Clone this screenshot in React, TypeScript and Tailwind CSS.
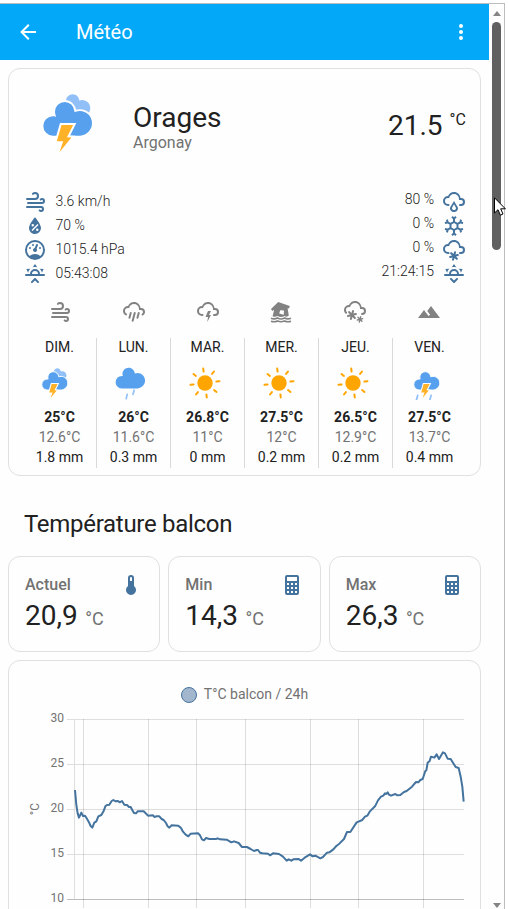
import React from "react";

const CLOUD_SHELL =
  "M6,16A5,5 0 0,1 1,11A5,5 0 0,1 6,6C7,3.65 9.3,2 12,2C15.43,2 18.24,4.66 18.5,8.03L19,8A4,4 0 0,1 23,12A4,4 0 0,1 19,16H18A1,1 0 0,1 17,15A1,1 0 0,1 18,14H19A2,2 0 0,0 21,12A2,2 0 0,0 19,10H17V9A5,5 0 0,0 12,4C9.5,4 7.45,5.82 7.06,8.19C6.73,8.07 6.37,8 6,8A3,3 0 0,0 3,11A3,3 0 0,0 6,14H6.5A1,1 0 0,1 6.5,16H6Z";
const HORIZON =
  "M3,12H7A5,5 0 0,1 12,7A5,5 0 0,1 17,12H21A1,1 0 0,1 22,13A1,1 0 0,1 21,14H3A1,1 0 0,1 2,13A1,1 0 0,1 3,12M15,12A3,3 0 0,0 12,9A3,3 0 0,0 9,12H15M12,2L14.39,5.42C13.65,5.15 12.84,5 12,5C11.16,5 10.35,5.15 9.61,5.42L12,2M3.34,7L7.5,6.65C6.9,7.16 6.36,7.78 5.94,8.5C5.5,9.24 5.25,10 5.11,10.79L3.34,7M20.65,7L18.88,10.79C18.74,10 18.47,9.23 18.05,8.5C17.63,7.78 17.1,7.15 16.5,6.64L20.65,7";
const FLAKE =
  "M7.88,18.07L10.07,17.5L8.46,15.88C8.07,15.5 8.07,14.86 8.46,14.46C8.85,14.07 9.5,14.07 9.88,14.46L11.5,16.07L12.07,13.88C12.21,13.34 12.76,13.03 13.29,13.17C13.83,13.31 14.14,13.86 14,14.4L13.41,16.59L15.6,16C16.14,15.86 16.69,16.17 16.83,16.71C16.97,17.24 16.66,17.79 16.12,17.93L13.93,18.5L15.54,20.12C15.93,20.5 15.93,21.15 15.54,21.54C15.15,21.93 14.5,21.93 14.12,21.54L12.5,19.93L11.93,22.12C11.79,22.66 11.24,22.97 10.71,22.83C10.17,22.69 9.86,22.14 10,21.6L10.59,19.41L8.4,20C7.86,20.14 7.31,19.83 7.17,19.29C7.03,18.76 7.34,18.21 7.88,18.07Z";

const ICONS = {
  back: "M20,11V13H8L13.5,18.5L12.08,19.92L4.16,12L12.08,4.08L13.5,5.5L8,11H20Z",
  dots: "M12,16A2,2 0 0,1 14,18A2,2 0 0,1 12,20A2,2 0 0,1 10,18A2,2 0 0,1 12,16M12,10A2,2 0 0,1 14,12A2,2 0 0,1 12,14A2,2 0 0,1 10,12A2,2 0 0,1 12,10M12,4A2,2 0 0,1 14,6A2,2 0 0,1 12,8A2,2 0 0,1 10,6A2,2 0 0,1 12,4Z",
  windy:
    "M4,10A1,1 0 0,1 3,9A1,1 0 0,1 4,8H12A2,2 0 0,0 14,6A2,2 0 0,0 12,4C11.45,4 10.95,4.22 10.59,4.59C10.2,5 9.56,5 9.17,4.59C8.78,4.2 8.78,3.56 9.17,3.17C9.9,2.45 10.9,2 12,2A4,4 0 0,1 16,6A4,4 0 0,1 12,10H4M19,12A1,1 0 0,0 20,11A1,1 0 0,0 19,10C18.72,10 18.47,10.11 18.29,10.29C17.9,10.68 17.27,10.68 16.88,10.29C16.5,9.9 16.5,9.27 16.88,8.88C17.42,8.34 18.17,8 19,8A3,3 0 0,1 22,11A3,3 0 0,1 19,14H5A1,1 0 0,1 4,13A1,1 0 0,1 5,12H19M18,18H4A1,1 0 0,1 3,17A1,1 0 0,1 4,16H18A3,3 0 0,1 21,19A3,3 0 0,1 18,22C17.17,22 16.42,21.66 15.88,21.12C15.5,20.73 15.5,20.1 15.88,19.71C16.27,19.32 16.9,19.32 17.29,19.71C17.47,19.89 17.72,20 18,20A1,1 0 0,0 19,19A1,1 0 0,0 18,18Z",
  humidity:
    "M12,3.25C12,3.25 6,10 6,14C6,17.32 8.69,20 12,20A6,6 0 0,0 18,14C18,10 12,3.25 12,3.25M14.47,9.97L15.53,11.03L9.53,17.03L8.47,15.97M9.75,10A1.25,1.25 0 0,1 11,11.25A1.25,1.25 0 0,1 9.75,12.5A1.25,1.25 0 0,1 8.5,11.25A1.25,1.25 0 0,1 9.75,10M14.25,14.5A1.25,1.25 0 0,1 15.5,15.75A1.25,1.25 0 0,1 14.25,17A1.25,1.25 0 0,1 13,15.75A1.25,1.25 0 0,1 14.25,14.5Z",
  gauge:
    "M12,2A10,10 0 0,0 2,12A10,10 0 0,0 12,22A10,10 0 0,0 22,12A10,10 0 0,0 12,2M12,4A8,8 0 0,1 20,12C20,14.4 19,16.5 17.3,18C15.9,16.7 14,16 12,16C10,16 8.2,16.7 6.7,18C5,16.5 4,14.4 4,12A8,8 0 0,1 12,4M14,5.89C13.62,5.9 13.26,6.15 13.1,6.54L11.81,9.77L11.71,10C11,10.13 10.41,10.6 10.14,11.26C9.73,12.29 10.23,13.45 11.26,13.86C12.29,14.27 13.45,13.77 13.86,12.74C14.12,12.08 14,11.32 13.57,10.76L13.67,10.5L14.96,7.29L14.97,7.26C15.17,6.75 14.92,6.17 14.41,5.96C14.28,5.91 14.15,5.89 14,5.89M10,6A1,1 0 0,0 9,7A1,1 0 0,0 10,8A1,1 0 0,0 11,7A1,1 0 0,0 10,6M7,9A1,1 0 0,0 6,10A1,1 0 0,0 7,11A1,1 0 0,0 8,10A1,1 0 0,0 7,9M17,9A1,1 0 0,0 16,10A1,1 0 0,0 17,11A1,1 0 0,0 18,10A1,1 0 0,0 17,9Z",
  sunrise:
    HORIZON +
    "M12.71,16.3L15.82,19.41C16.21,19.8 16.21,20.43 15.82,20.82C15.43,21.21 14.8,21.21 14.41,20.82L12,18.41L9.59,20.82C9.2,21.21 8.57,21.21 8.18,20.82C7.79,20.43 7.79,19.8 8.18,19.41L11.29,16.3C11.5,16.1 11.74,16 12,16C12.26,16 12.5,16.1 12.71,16.3Z",
  sunset:
    HORIZON +
    "M12.71,20.71L15.82,17.6C16.21,17.21 16.21,16.57 15.82,16.18C15.43,15.79 14.8,15.79 14.41,16.18L12,18.59L9.59,16.18C9.2,15.79 8.57,15.79 8.18,16.18C7.79,16.57 7.79,17.21 8.18,17.6L11.29,20.71C11.5,20.9 11.74,21 12,21C12.26,21 12.5,20.9 12.71,20.71Z",
  rainy:
    CLOUD_SHELL +
    "M14.83,15.67C16.39,17.23 16.39,19.5 14.83,21.08C14.05,21.86 13,22 12,22C11,22 9.95,21.86 9.17,21.08C7.61,19.5 7.61,17.23 9.17,15.67L12,11L14.83,15.67M13.41,16.69L12,14.25L10.59,16.69C9.8,17.5 9.8,18.7 10.59,19.5C11,19.93 11.5,20 12,20C12.5,20 13,19.93 13.41,19.5C14.2,18.7 14.2,17.5 13.41,16.69Z",
  snowflake:
    "M20.79,13.95L18.46,14.57L16.46,13.44V10.56L18.46,9.43L20.79,10.05L21.31,8.12L19.54,7.65L20,5.88L18.07,5.36L17.45,7.69L15.45,8.82L13,7.38V5.12L14.71,3.41L13.29,2L12,3.29L10.71,2L9.29,3.41L11,5.12V7.38L8.5,8.82L6.5,7.69L5.92,5.36L4,5.88L4.47,7.65L2.7,8.12L3.22,10.05L5.55,9.43L7.55,10.56V13.45L5.55,14.58L3.22,13.96L2.7,15.89L4.47,16.36L4,18.12L5.93,18.64L6.55,16.31L8.55,15.18L11,16.62V18.88L9.29,20.59L10.71,22L12,20.71L13.29,22L14.7,20.59L13,18.88V16.62L15.5,15.17L17.5,16.3L18.12,18.63L20,18.12L19.53,16.35L21.3,15.88L20.79,13.95M9.5,10.56L12,9.11L14.5,10.56V13.44L12,14.89L9.5,13.44V10.56Z",
  snowy: CLOUD_SHELL + FLAKE,
  pouring:
    "M9,12C9.53,12.14 9.85,12.69 9.71,13.22L8.41,18.05C8.27,18.59 7.72,18.9 7.19,18.76C6.65,18.62 6.34,18.07 6.5,17.54L7.78,12.71C7.92,12.17 8.47,11.86 9,12M13,12C13.53,12.14 13.85,12.69 13.71,13.22L11.64,20.95C11.5,21.5 10.95,21.8 10.41,21.66C9.88,21.5 9.56,20.97 9.7,20.43L11.78,12.71C11.92,12.17 12.47,11.86 13,12M17,12C17.53,12.14 17.85,12.69 17.71,13.22L16.41,18.05C16.27,18.59 15.72,18.9 15.19,18.76C14.65,18.62 14.34,18.07 14.5,17.54L15.78,12.71C15.92,12.17 16.47,11.86 17,12M17,10V9A5,5 0 0,0 12,4C9.5,4 7.45,5.82 7.06,8.19C6.73,8.07 6.37,8 6,8A3,3 0 0,0 3,11C3,12.11 3.6,13.08 4.5,13.6V13.59C5,13.87 5.14,14.5 4.87,14.96C4.59,15.43 4,15.6 3.5,15.32V15.33C2,14.47 1,12.85 1,11A5,5 0 0,1 6,6C7,3.65 9.3,2 12,2C15.43,2 18.24,4.66 18.5,8.03L19,8A4,4 0 0,1 23,12C23,13.5 22.2,14.77 21,15.46V15.46C20.5,15.73 19.91,15.57 19.63,15.09C19.36,14.61 19.5,14 20,13.72V13.73C20.6,13.39 21,12.74 21,12A2,2 0 0,0 19,10H17Z",
  lightning: CLOUD_SHELL + "M12,11H15L13,15H15L11.25,22L12,17H9.5L12,11Z",
  mountains: "M14,6L10.25,11L13.1,14.8L11.5,16C9.81,13.75 7,10 7,10L1,18H23L14,6Z",
  thermometer:
    "M15 13V5A3 3 0 0 0 9 5V13A5 5 0 1 0 15 13M12 4A1 1 0 0 1 13 5V8H11V5A1 1 0 0 1 12 4Z",
  calculator:
    "M7,2H17A2,2 0 0,1 19,4V20A2,2 0 0,1 17,22H7A2,2 0 0,1 5,20V4A2,2 0 0,1 7,2M7,4V8H17V4H7M7,10V12H9V10H7M11,10V12H13V10H11M15,10V12H17V10H15M7,14V16H9V14H7M11,14V16H13V14H11M15,14V16H17V14H15M7,18V20H9V18H7M11,18V20H13V18H11M15,18V20H17V18H15Z",
};

function Icon({ name }: { name: keyof typeof ICONS }) {
  return (
    <svg viewBox="0 0 24 24" className="size-6 shrink-0 fill-current">
      <path d={ICONS[name]} />
    </svg>
  );
}

function FloodIcon() {
  return (
    <svg viewBox="0 0 24 24" className="size-6 fill-current">
      <path d="M9.2,2L20.8,6.1L20,8.6L18.6,8.2L19.8,15.6C18.5,16.9 17,16.9 15.5,16C13.2,17.3 10.8,17.3 8.5,16C7,16.9 5,17.1 3.6,16.3L5.2,9.8L3.3,11L2,9.1L9.2,2M11.2,10.2L10.2,13.6L14.7,14.8L15,10.6L11.2,10.2Z" />
      <path
        d="M2,18.2C4.2,19.2 6.3,19.2 8.5,18C10.8,19.3 13.2,19.3 15.5,18C17.7,19.2 19.8,19.2 22,18.2M2,21.2C4.2,21.9 6.3,21.9 8.5,20.9C10.8,22 13.2,22 15.5,20.9C17.7,21.9 19.8,21.9 22,21.2"
        fill="none"
        stroke="currentColor"
        strokeWidth="1.6"
      />
    </svg>
  );
}

function HeavySnowIcon() {
  return (
    <svg viewBox="0 0 24 24" className="size-6 fill-current">
      <path d="M1,10A5,5 0 0,1 6,5C7,2.65 9.3,1 12,1C15.43,1 18.24,3.66 18.5,7.03L19,7A4,4 0 0,1 23,11A4,4 0 0,1 19,15A1,1 0 0,1 18,14A1,1 0 0,1 19,13A2,2 0 0,0 21,11A2,2 0 0,0 19,9H17V8A5,5 0 0,0 12,3C9.5,3 7.45,4.82 7.06,7.19C6.73,7.07 6.37,7 6,7A3,3 0 0,0 3,10C3,10.85 3.35,11.61 3.91,12.16C4.27,12.55 4.26,13.16 3.88,13.54C3.5,13.93 2.85,13.93 2.47,13.54C1.56,12.63 1,11.38 1,10Z" />
      <path d={FLAKE} transform="translate(-3.4 -3.5) scale(1.03)" />
      <path d={FLAKE} transform="translate(8.6 6.7) scale(0.7)" />
    </svg>
  );
}

const CLOUD =
  "M47.7,35.4c0-4.6-3.7-8.2-8.2-8.2c-1,0-1.9,0.2-2.8,0.5c-0.3-3.4-3.1-6.2-6.6-6.2c-3.7,0-6.7,3-6.7,6.7c0,0.8,0.2,1.6,0.4,2.3c-0.3-0.1-0.7-0.1-1-0.1c-3.7,0-6.7,3-6.7,6.7c0,3.6,2.9,6.6,6.5,6.7l17.2,0C44.2,43.3,47.7,39.8,47.7,35.4z";
const BOLT = "22.5,35 34.1,35 28,47.3 32.4,47.6 20.5,62.3 24.2,51.3 17.8,51.3";

function Thunder({ className, rain = false }: { className: string; rain?: boolean }) {
  return (
    <svg viewBox="0 0 60 66" className={className}>
      {!rain && <path d={CLOUD} transform="translate(3.6 -17.2)" fill="#91c0f8" />}
      <path
        d={CLOUD}
        transform="translate(-22.4 -23.4) scale(1.6)"
        fill="#57a0ee"
        stroke="#fff"
        strokeWidth="1.2"
      />
      {rain && (
        <path
          d="M11,57L8.5,66M37,57L34.5,66"
          stroke="#91c0f8"
          strokeWidth="3.4"
          strokeLinecap="round"
        />
      )}
      <polygon points={BOLT} fill="#ffb128" stroke="#fff" strokeWidth="4" paintOrder="stroke" />
    </svg>
  );
}

function Shower() {
  return (
    <svg viewBox="0 0 36 38" className="-ml-1 h-[38px] w-9">
      <path d={CLOUD} transform="translate(-13.3 -16.3) scale(0.93)" fill="#57a0ee" />
      <path
        d="M13.2,30.4L12.2,34.6M20.1,26.2L19,30.4"
        stroke="#91c0f8"
        strokeWidth="1.7"
        strokeLinecap="round"
      />
    </svg>
  );
}

function Sun() {
  return (
    <svg viewBox="-18 -18 36 36" className="-ml-[5px] size-9">
      <circle r="7.7" fill="#ffa500" />
      {[-7, 38, 83, 128, 173, 218, 263, 308].map((a) => (
        <path
          key={a}
          d="M0,-11.5V-14.6"
          transform={`rotate(${a})`}
          stroke="#ffa500"
          strokeWidth="2"
          strokeLinecap="round"
        />
      ))}
    </svg>
  );
}

const LEFT = [
  ["windy", "3.6 km/h"],
  ["humidity", "70 %"],
  ["gauge", "1015.4 hPa"],
  ["sunrise", "05:43:08"],
] as const;

const RIGHT = [
  ["rainy", "80 %"],
  ["snowflake", "0 %"],
  ["snowy", "0 %"],
  ["sunset", "21:24:15"],
] as const;

const DAYS = [
  { day: "DIM.", hi: "25", lo: "12.6", rain: "1.8", icon: <Thunder className="-ml-2 h-[34px] w-[31px]" /> },
  { day: "LUN.", hi: "26", lo: "11.6", rain: "0.3", icon: <Shower /> },
  { day: "MAR.", hi: "26.8", lo: "11", rain: "0", icon: <Sun /> },
  { day: "MER.", hi: "27.5", lo: "12", rain: "0.2", icon: <Sun /> },
  { day: "JEU.", hi: "26.5", lo: "12.9", rain: "0.2", icon: <Sun /> },
  { day: "VEN.", hi: "27.5", lo: "13.7", rain: "0.4", icon: <Thunder rain className="-ml-1 h-[34px] w-[31px]" /> },
];

const SENSORS = [
  { label: "Actuel", value: "20,9", icon: "thermometer" },
  { label: "Min", value: "14,3", icon: "calculator" },
  { label: "Max", value: "26,3", icon: "calculator" },
] as const;

const SERIES =
  "225,390 229,435 233,460 237,473 244,458 249,468 255,467 260,475 266,485 272,498 277,503 283,488 289,484 295,469 304,465 311,453 316,439 321,435 328,434 335,423 340,420 347,424 354,423 359,427 366,423 373,434 381,435 387,441 392,441 398,452 402,459 408,460 413,454 431,454 444,467 459,466 463,471 470,469 478,469 485,477 491,480 498,489 503,499 508,503 515,496 535,497 543,504 549,515 557,524 565,529 572,521 594,520 600,526 606,538 612,541 618,534 628,537 648,537 653,535 660,538 680,539 694,547 702,544 716,549 726,561 741,561 752,567 762,573 770,570 774,570 780,578 787,580 804,581 810,586 819,580 837,582 848,589 860,602 866,598 874,602 880,598 896,597 903,602 914,593 924,587 930,583 938,589 946,587 961,595 969,591 981,578 988,577 1000,568 1009,558 1018,551 1032,537 1041,516 1051,516 1070,487 1087,480 1095,470 1102,467 1109,455 1125,439 1134,421 1143,410 1150,407 1155,400 1159,402 1163,397 1167,404 1173,407 1186,402 1192,406 1201,405 1212,396 1220,393 1236,380 1248,366 1255,367 1261,360 1268,357 1276,333 1279,331 1283,308 1289,303 1293,290 1303,293 1310,283 1317,297 1329,277 1335,280 1343,296 1352,297 1367,321 1376,324 1382,350 1387,380 1391,425";

function Chart() {
  return (
    <svg viewBox="9 711 471 198" className="block h-[198px] w-[471px]">
      {[30, 25, 20, 15, 10].map((v, i) => (
        <g key={v}>
          <path
            d={`M67,${719.5 + i * 45}H464`}
            stroke={v === 10 ? "#bdbdbd" : "#dedede"}
            strokeWidth="1"
          />
          <text x="64" y={722.3 + i * 45} textAnchor="end" fontSize="12" fill="#727272">
            {v}
          </text>
        </g>
      ))}
      <path d="M74.5,719V899" stroke="#dedede" />
      {[83, 148, 196, 245, 310, 358, 423].map((x) => (
        <path key={x} d={`M${x + 0.5},719V908`} stroke="#000" strokeOpacity="0.13" />
      ))}
      <text
        transform="translate(39 809) rotate(-90)"
        textAnchor="middle"
        fontSize="12"
        fill="#727272"
      >
        °C
      </text>
      <polyline
        points={SERIES}
        transform="translate(0 660) scale(0.33333)"
        fill="none"
        stroke="#44739e"
        strokeWidth="6"
        strokeLinejoin="round"
      />
    </svg>
  );
}

export default function App() {
  return (
    <div className="relative flex h-[909px] w-[508px] flex-col overflow-hidden bg-white font-[Roboto,sans-serif] text-[#212121]">
      <div className="h-1 w-[505px] shrink-0 border-b border-[#bdbdbd]" />
      <div className="flex min-h-0 flex-1">
        <main className="w-[489px] shrink-0 overflow-hidden bg-[#fefefe]">
          <header className="flex h-14 items-center bg-[#03a9f8] pr-4 pl-4 text-white">
            <Icon name="back" />
            <h1 className="ml-9 flex-1 text-xl">Météo</h1>
            <Icon name="dots" />
          </header>

          <div className="px-2 pt-2">
            <section className="h-[408px] w-[473px] rounded-xl border border-[#e0e0e0] pt-[21px]">
              <div className="flex h-[100px] pr-[14px] pl-[30px]">
                <Thunder className="h-[66px] w-[60px]" />
                <div className="ml-[34px] flex-1 pt-3">
                  <div className="text-[28px] leading-8">Orages</div>
                  <div className="text-base leading-[18px] text-[#727272]">Argonay</div>
                </div>
                <div className="flex items-start">
                  <span className="pt-5 text-[28px] leading-8">21.5</span>
                  <span className="ml-[7px] pt-5 text-base leading-5">°C</span>
                </div>
              </div>

              <div className="flex justify-between pr-[14px] pl-[14px] text-sm leading-6 font-light text-[#212121]">
                <ul>
                  {LEFT.map(([icon, text]) => (
                    <li key={icon} className="flex h-6">
                      <span className="text-[#44739e]">
                        <Icon name={icon} />
                      </span>
                      <span className="ml-[8.5px] -mt-px">{text}</span>
                    </li>
                  ))}
                </ul>
                <ul>
                  {RIGHT.map(([icon, text]) => (
                    <li key={icon} className="flex h-6 justify-end">
                      <span className="mr-2 -mt-[3px]">{text}</span>
                      <span className="text-[#44739e]">
                        <Icon name={icon} />
                      </span>
                    </li>
                  ))}
                </ul>
              </div>

              <div className="mt-[14px] ml-[14px] grid w-[443px] grid-cols-6 justify-items-center text-[#828282]">
                <Icon name="windy" />
                <Icon name="pouring" />
                <Icon name="lightning" />
                <FloodIcon />
                <HeavySnowIcon />
                <Icon name="mountains" />
              </div>

              <div className="mt-[14px] ml-[14px] grid w-[444px] grid-cols-6 text-center text-sm leading-5">
                {DAYS.map((d) => (
                  <div
                    key={d.day}
                    className="h-[130px] border-r border-[#d9d9d9] last:border-transparent"
                  >
                    <div className="h-[26px] leading-[19px]">{d.day}</div>
                    <div className="flex h-[38px] items-center justify-center">{d.icon}</div>
                    <div className="mt-[5px] font-bold">{d.hi}°C</div>
                    <div className="text-[#727272]">{d.lo}°C</div>
                    <div>{d.rain} mm</div>
                  </div>
                ))}
              </div>
            </section>

            <h2 className="h-20 pt-8 pl-4 text-2xl leading-8 tracking-[-0.012em]">
              Température balcon
            </h2>

            <div className="grid w-[473px] grid-cols-3 gap-2">
              {SENSORS.map((s) => (
                <section key={s.label} className="h-24 rounded-xl border border-[#e0e0e0] px-4 pt-4">
                  <div className="flex h-6 justify-between">
                    <span className="text-base leading-6 font-medium text-[#727272]">{s.label}</span>
                    <span className="text-[#44739e]">
                      <Icon name={s.icon} />
                    </span>
                  </div>
                  <div className="mt-[3px] flex items-baseline leading-8">
                    <span className="text-[28px]">{s.value}</span>
                    <span className="ml-[7.5px] text-lg leading-8 text-[#727272]">°C</span>
                  </div>
                </section>
              ))}
            </div>

            <section className="mt-2 h-[300px] w-[473px] rounded-xl border border-[#e0e0e0]">
              <div className="flex h-[50px] items-start justify-center pt-[26px]">
                <span className="mr-[7px] size-4 rounded-full border border-[#44739e] bg-[#a2b6ce]" />
                <span className="-mt-px text-sm leading-4 text-[#727272]">T°C balcon / 24h</span>
              </div>
              <Chart />
            </section>
          </div>
        </main>

        <aside className="flex w-4 shrink-0 flex-col items-center border-r border-[#bdbdbd] bg-[#fefefe] pt-[7px] pb-px">
          <svg viewBox="0 0 8 5" className="h-[5px] w-2 fill-[#848484]">
            <path d="M4,0L8,5H0Z" />
          </svg>
          <div className="mt-1.5 h-[228px] w-[9px] rounded-full bg-[#606060]" />
          <div className="flex-1" />
          <svg viewBox="0 0 8 5" className="h-[5px] w-2 fill-[#848484]">
            <path d="M4,5L8,0H0Z" />
          </svg>
        </aside>
      </div>

      <svg viewBox="0 0 12 19" className="absolute top-[197px] left-[494px] h-[19px] w-3">
        <path
          d="M0.5,0.8V16L4,12.7L6.4,18.2L9,17L6.7,11.8H11.4Z"
          fill="#fff"
          stroke="#000"
          strokeWidth="1"
        />
      </svg>
    </div>
  );
}
